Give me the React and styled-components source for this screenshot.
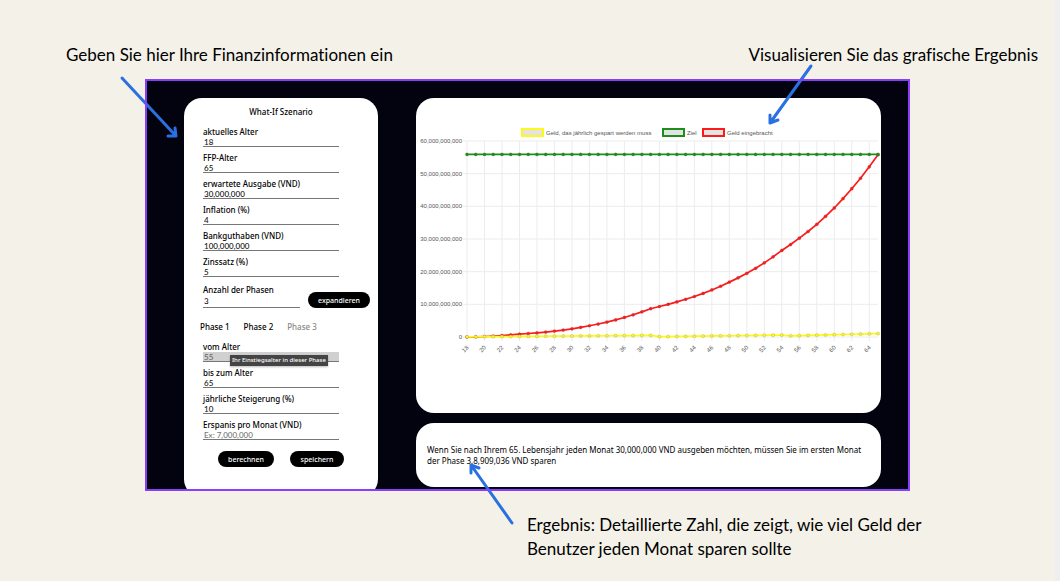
import React from "react";
import styled, { createGlobalStyle } from "styled-components";

const GlobalStyle = createGlobalStyle`
  * { box-sizing: border-box; }
  body {
    margin: 0;
    background: #f4f1e9;
    color: #000;
    font-family: Lato, "Liberation Sans", sans-serif;
  }
`;

const Page = styled.main`
  min-height: 100vh;
  padding: 43px 17px 20px 66px;
  border-right: 5px solid #eeeef0;
`;

const Callouts = styled.header`
  display: flex;
  justify-content: space-between;
  gap: 24px;
`;

const Callout = styled.p`
  margin: 0;
  font-size: 17px;
  font-variant-ligatures: none;
  line-height: 24px;
`;

const Explanation = styled(Callout)`
  max-width: 420px;
  margin: 22px auto 0 461px;
`;

const Frame = styled.section`
  position: relative;
  margin: 12px 128px 0 79px;
  &::after {
    content: "";
    position: absolute;
    inset: 0;
    border: 2px solid #8b3dff;
    pointer-events: none;
  }
`;

const Dashboard = styled.div`
  display: grid;
  grid-template-columns: 194px minmax(0, 1fr);
  gap: 38px;
  padding: 19px 29px 4px 39px;
  background: #03030f;
  overflow: hidden;
  font-family: "Noto Sans", sans-serif;
`;

const Card = styled.div`
  background: #fff;
  border-radius: 18px;
`;

const Planner = styled(Card).attrs({ as: "form" })`
  padding: 8px 8px 24px 19px;
  margin-bottom: -10px;
`;

const Title = styled.h1`
  margin: 0 0 8px -11px;
  font-size: 8px;
  font-weight: 500;
  line-height: 12px;
  text-align: center;
`;

const Fields = styled.div`
  display: grid;
  gap: 5px;
`;

const FieldBox = styled.div`
  position: relative;
  display: flex;
  flex-direction: column;
  width: ${(p) => (p.$short ? "97px" : "136px")};
`;

const Label = styled.label`
  font-size: 8px;
  font-weight: 500;
  line-height: 11px;
  white-space: nowrap;
`;

const Input = styled.input`
  width: 100%;
  height: ${(p) => (p.$tall ? "13px" : "10px")};
  padding: 0 1px;
  border: 0;
  border-bottom: 1px solid #777;
  border-radius: 0;
  outline: 0;
  background: ${(p) => (p.disabled ? "#d0d0d0" : "transparent")};
  color: ${(p) => (p.disabled ? "#666" : "#111")};
  font: 500 8px Lato, sans-serif;
  &::placeholder { color: #777; }
`;

const Tooltip = styled.span`
  position: absolute;
  top: 14px;
  left: 27px;
  padding: 0 2px;
  background: #444;
  box-shadow: 0 1px 2px #0004;
  color: #fff;
  font-size: 6px;
  font-weight: 500;
  line-height: 11px;
  white-space: nowrap;
`;

const PhaseCount = styled.div`
  display: flex;
  align-items: flex-end;
  gap: 8px;
  margin-top: 7px;
`;

const Pill = styled.button`
  width: ${(p) => p.$width};
  height: 16px;
  padding: 0;
  border: 0;
  border-radius: 8px;
  background: #000;
  color: #fff;
  font: 500 7px "Noto Sans", sans-serif;
`;

const Tabs = styled.div`
  display: flex;
  gap: 14px;
  margin: 13px 0 8px -3px;
`;

const Tab = styled.button`
  padding: 0;
  border: 0;
  background: none;
  color: ${(p) => (p.$muted ? "#888" : "#000")};
  font: 500 8px/12px "Noto Sans", sans-serif;
`;

const Actions = styled.div`
  display: flex;
  gap: 16px;
  margin: 11px 0 0 15px;
`;

const Results = styled.div`
  display: flex;
  flex-direction: column;
  gap: 10px;
`;

const ChartSvg = styled.svg`
  display: block;
  width: 100%;
  font-family: "Liberation Sans", sans-serif;
  font-size: 6px;
  fill: #555;
`;

const Summary = styled(Card)`
  padding: 21px 11px;
`;

const SummaryText = styled.p`
  margin: 0;
  font-size: 8px;
  line-height: 11px;
`;

const ArrowSvg = styled.svg`
  position: absolute;
  fill: none;
  stroke: #2b70e0;
  stroke-width: 3;
  stroke-linecap: round;
  stroke-linejoin: round;
  pointer-events: none;
`;

const StartArrow = styled(ArrowSvg)`
  top: -4px;
  left: -27px;
`;

const ChartArrow = styled(ArrowSvg)`
  top: -17px;
  right: 94px;
`;

const ResultArrow = styled(ArrowSvg)`
  bottom: -37px;
  left: 322px;
`;

function Field({ id, label, short, tooltip, ...input }) {
  return (
    <FieldBox $short={short}>
      <Label htmlFor={id}>{label}</Label>
      <Input id={id} $tall={short} aria-describedby={tooltip ? id + "-tip" : undefined} {...input} />
      {tooltip && <Tooltip role="tooltip" id={id + "-tip"}>{tooltip}</Tooltip>}
    </FieldBox>
  );
}

const PLOT = { left: 51, right: 462, top: 43, bottom: 239 };
const FIRST_AGE = 18;
const LAST_AGE = 65;
const ages = Array.from({ length: LAST_AGE - FIRST_AGE + 1 }, (_, i) => FIRST_AGE + i);
const ageX = (age) => PLOT.left + ((age - FIRST_AGE) * (PLOT.right - PLOT.left)) / (LAST_AGE - FIRST_AGE);
const moneyY = (billions) => PLOT.bottom - (billions * (PLOT.bottom - PLOT.top)) / 60;

const savings = [
  0, 0.06, 0.15, 0.28, 0.45, 0.64, 0.86, 1.07, 1.28, 1.52, 1.8, 2.13, 2.5, 2.95, 3.44,
  3.97, 4.56, 5.24, 5.98, 6.8, 7.7, 8.66, 9.33, 10, 10.75, 11.54, 12.4, 13.35, 14.4,
  15.54, 16.8, 18.1, 19.5, 21.03, 22.7, 24.53, 26.5, 28.3, 30.25, 32.3, 34.5, 36.95,
  39.5, 42.35, 45.4, 48.6, 52.1, 55.8,
];
const yearly = ages.map((age) => {
  if (age < 40) return 0.05 + (age - 18) * 0.021;
  if (age < 55) return 0.1 + (age - 40) * 0.036;
  return 0.35 + (age - 55) * 0.07;
});
const series = [
  { name: "Geld eingebracht", color: "#ff1a1a", values: savings },
  { name: "Ziel", color: "#1b8e1b", values: ages.map(() => 55.9) },
  { name: "Geld, das jährlich gespart werden muss", color: "#fdf91c", values: yearly },
];
const legend = [
  { ...series[2], x: 105 },
  { ...series[1], x: 246 },
  { ...series[0], x: 286 },
];

function Chart() {
  return (
    <ChartSvg viewBox="0 0 465 315" role="img" aria-label="Geld nach Alter">
      {legend.map((item) => (
        <g key={item.name}>
          <rect x={item.x + 1} y="31" width="21" height="7" fill="#e3e3e3" stroke={item.color} strokeWidth="2" />
          <text x={item.x + 25} y="37">{item.name}</text>
        </g>
      ))}
      <g stroke="#ececec" strokeWidth="1">
        {[0, 10, 20, 30, 40, 50, 60].map((v) => (
          <line key={v} x1={PLOT.left - 4} x2={PLOT.right} y1={moneyY(v)} y2={moneyY(v)} />
        ))}
        {ages.filter((age) => age % 2 === 0).map((age) => (
          <line key={age} x1={ageX(age)} x2={ageX(age)} y1={PLOT.top} y2={PLOT.bottom + 4} />
        ))}
      </g>
      {[0, 10, 20, 30, 40, 50, 60].map((v) => (
        <text key={v} x="46" y={moneyY(v) + 2} textAnchor="end">
          {v ? `${v},000,000,000` : "0"}
        </text>
      ))}
      {ages.filter((age) => age % 2 === 0).map((age) => (
        <text key={age} textAnchor="end" transform={`translate(${ageX(age) + 2} ${PLOT.bottom + 11}) rotate(-45)`}>
          {age}
        </text>
      ))}
      {series.map(({ name, color, values }) => (
        <g key={name}>
          <polyline
            points={values.map((v, i) => `${ageX(ages[i])},${moneyY(v)}`).join(" ")}
            fill="none"
            stroke={color}
            strokeWidth="1.7"
          />
          {values.map((v, i) => (
            <circle key={i} cx={ageX(ages[i])} cy={moneyY(v)} r="1.6" fill={color} stroke="#666" strokeOpacity="0.35" strokeWidth="0.6" />
          ))}
        </g>
      ))}
    </ChartSvg>
  );
}

export default function App() {
  return (
    <Page>
      <GlobalStyle />
      <Callouts>
        <Callout>Geben Sie hier Ihre Finanzinformationen ein</Callout>
        <Callout>Visualisieren Sie das grafische Ergebnis</Callout>
      </Callouts>
      <Frame>
        <Dashboard>
          <Planner>
            <Title>What-If Szenario</Title>
            <Fields>
              <Field id="age" label="aktuelles Alter" defaultValue="18" />
              <Field id="ffp-age" label="FFP-Alter" defaultValue="65" />
              <Field id="expense" label="erwartete Ausgabe (VND)" defaultValue="30,000,000" />
              <Field id="inflation" label="Inflation (%)" defaultValue="4" />
              <Field id="balance" label="Bankguthaben (VND)" defaultValue="100,000,000" />
              <Field id="interest" label="Zinssatz (%)" defaultValue="5" />
            </Fields>
            <PhaseCount>
              <Field id="phases" label="Anzahl der Phasen" defaultValue="3" short />
              <Pill type="button" $width="62px">expandieren</Pill>
            </PhaseCount>
            <Tabs>
              <Tab type="button">Phase 1</Tab>
              <Tab type="button">Phase 2</Tab>
              <Tab type="button" $muted>Phase 3</Tab>
            </Tabs>
            <Fields>
              <Field id="from-age" label="vom Alter" defaultValue="55" disabled tooltip="Ihr Einstiegsalter in dieser Phase" />
              <Field id="to-age" label="bis zum Alter" defaultValue="65" />
              <Field id="increase" label="jährliche Steigerung (%)" defaultValue="10" />
              <Field id="saving" label="Erspanis pro Monat (VND)" placeholder="Ex: 7,000,000" />
            </Fields>
            <Actions>
              <Pill type="button" $width="56px">berechnen</Pill>
              <Pill type="button" $width="54px">speichern</Pill>
            </Actions>
          </Planner>
          <Results>
            <Card>
              <Chart />
            </Card>
            <Summary>
              <SummaryText>
                Wenn Sie nach Ihrem 65. Lebensjahr jeden Monat 30,000,000 VND ausgeben möchten, müssen Sie im ersten Monat der Phase 3,8,909,036 VND sparen
              </SummaryText>
            </Summary>
          </Results>
        </Dashboard>
        <StartArrow width="62" height="64" aria-hidden="true">
          <path d="M4 3 58 61M57 53 58 61 50 61" />
        </StartArrow>
        <ChartArrow width="50" height="66" aria-hidden="true">
          <path d="M45 4 4 61M4 53 4 61 12 58" />
        </ChartArrow>
        <ResultArrow width="50" height="66" aria-hidden="true">
          <path d="M45 61 4 3M4 11 4 3 12 6" />
        </ResultArrow>
      </Frame>
      <Explanation>
        Ergebnis: Detaillierte Zahl, die zeigt, wie viel Geld der Benutzer jeden Monat sparen sollte
      </Explanation>
    </Page>
  );
}
